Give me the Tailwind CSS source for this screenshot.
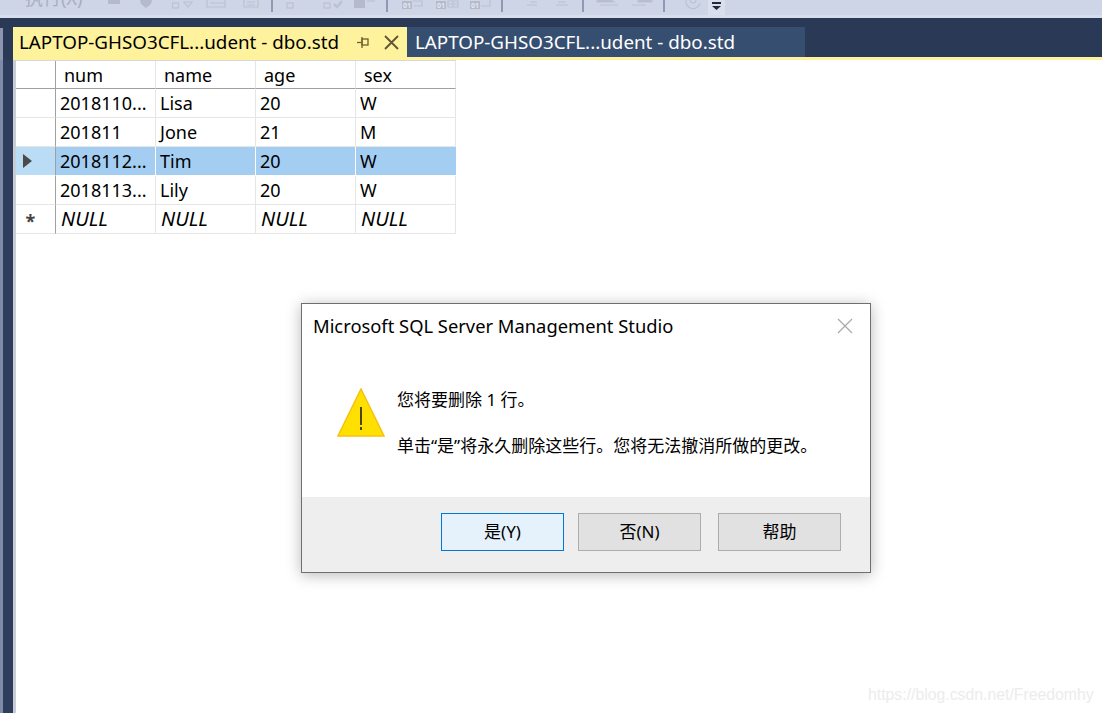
<!DOCTYPE html>
<html lang="zh-CN">
<head>
    <meta charset="UTF-8">
    <title>Microsoft SQL Server Management Studio</title>
    <script src="https://cdn.jsdelivr.net/npm/@tailwindcss/browser@4"></script>
</head>
<body class="bg-white overflow-hidden font-['Noto_Sans','Noto_Sans_CJK_SC',sans-serif] text-[18px] text-black">
    <div class="relative flex flex-col w-[1102px] h-[713px] overflow-hidden">

        <!-- Toolbar, cut off at the top of the shot -->
        <div class="relative h-[18px] shrink-0 bg-[#cdd5e6] overflow-hidden border-b-[3px] border-[#d7ddea]">
            <span class="block ml-[25px] -mt-[15px] leading-[26px] text-[#a9afbe]">执行(X)</span>
            <svg class="absolute left-0 top-0" width="1102" height="15" viewBox="0 0 1102 15" fill="none" stroke="#bcc2d1" stroke-width="1.200">
                <rect x="108" y="0" width="12" height="4" fill="#b5bbcb" stroke="none"/>
                <path d="M140 0h12l-1 4-5 4-5-4z" fill="#b5bbcb" stroke="none"/>
                <rect x="172.500" y="3" width="6" height="5"/>
                <path d="M184 2h8l-4 5z"/>
                <path d="M207 0v7h18v-7M210 3h15"/>
                <path d="M244 0v7h14v-7M247 2h8M247 5h8"/>
                <rect x="287" y="3" width="6" height="5"/>
                <rect x="324" y="3" width="6" height="5"/>
                <path d="M334 4l3 3 5-6" stroke-width="2.500"/>
                <rect x="354" y="0" width="11" height="8" fill="#b5bbcb" stroke="none"/>
                <path d="M367 1h8"/>
                <rect x="402" y="1" width="10" height="8" fill="#b5bbcb" stroke="none"/>
                <text x="403" y="8" font-size="7" font-weight="700" fill="#e4e8f1" stroke="none">01</text>
                <path d="M413 1h9v5h-8"/>
                <rect x="436" y="1" width="10" height="8" fill="#b5bbcb" stroke="none"/>
                <text x="437" y="8" font-size="7" font-weight="700" fill="#e4e8f1" stroke="none">01</text>
                <path d="M448 1h10v6h-10zM453 1v6M448 4h10"/>
                <rect x="470" y="1" width="10" height="8" fill="#b5bbcb" stroke="none"/>
                <text x="471" y="8" font-size="7" font-weight="700" fill="#e4e8f1" stroke="none">01</text>
                <path d="M490 0v6h-9"/>
                <path d="M530 2h7M527 5h10"/>
                <path d="M558 2h8M556 5h12"/>
                <path d="M597 0h14l3 2h-17zM600 5h18" fill="#b5bbcb"/>
                <path d="M638 0h14v2h-14zM632 5h14" fill="#b5bbcb"/>
                <path d="M686 0a7 7 0 0 0 14 3M690 0a3 3 0 0 0 6 0"/>
                <g fill="#8e9ab3" stroke="none">
                    <rect x="271" y="0" width="2" height="12"/>
                    <rect x="386" y="0" width="2" height="12"/>
                    <rect x="501" y="0" width="2" height="12"/>
                    <rect x="582" y="0" width="2" height="12"/>
                    <rect x="663" y="0" width="2" height="12"/>
                </g>
                <rect x="708" y="0" width="17" height="15" fill="#d9dfec" stroke="none"/>
                <rect x="712" y="2" width="9" height="2" fill="#1e2a3a" stroke="none"/>
                <path d="M712 6h9l-4.500 4z" fill="#1e2a3a" stroke="none"/>
            </svg>
        </div>

        <!-- Document tabs -->
        <div class="flex h-[42px] shrink-0 bg-[#2a3a56]">
            <div class="w-[3px] h-[32px] mt-[10px] bg-[#8c96b0]"></div>
            <div class="flex-1 flex flex-col justify-end ml-[10px]">
                <div class="flex h-[30px] text-[18.8px]">
                    <div class="flex items-center w-[394px] pl-[6px] pr-[8px] bg-[#fff29d]">
                        <span class="flex-1 whitespace-nowrap">LAPTOP-GHSO3CFL...udent - dbo.std</span>
                        <svg class="mr-[14px]" width="13" height="11" viewBox="0 0 13 11" fill="none" stroke="#6b5f2e" stroke-width="1.300">
                            <path d="M0 5.500h4"/>
                            <rect x="5" y="2" width="6" height="6"/>
                            <path d="M5 0v11"/>
                        </svg>
                        <svg width="15" height="15" viewBox="0 0 15 15" fill="none" stroke="#5e5434" stroke-width="1.800">
                            <path d="M1 1l13 13M14 1L1 14"/>
                        </svg>
                    </div>
                    <div class="flex items-center w-[398px] pl-[8px] bg-[#364f70] text-white whitespace-nowrap">LAPTOP-GHSO3CFL...udent - dbo.std</div>
                </div>
                <div class="h-[3px] bg-[#fff29d]"></div>
            </div>
        </div>

        <!-- Results grid -->
        <div class="flex-1 flex min-h-0">
            <div class="w-[3px] bg-[#7f89a8]"></div>
            <div class="w-[10px] bg-[#2e3d5c]"></div>
            <div class="w-[3px] bg-[#c9cdd8]"></div>
            <div class="self-start grid grid-cols-[40px_100px_100px_100px_100px] grid-rows-[28px_29px_29px_29px_29px_29px] w-[440px] border-t border-[#d8d8d8]">
                <div class="border-r border-b border-r-[#a0a0a0] border-b-[#a0a0a0]"></div>
                <div class="flex items-center pl-[8px] pt-[1px] border-r border-b border-r-[#e6e6e6] border-b-[#a0a0a0]">num</div>
                <div class="flex items-center pl-[8px] pt-[1px] border-r border-b border-r-[#e6e6e6] border-b-[#a0a0a0]">name</div>
                <div class="flex items-center pl-[8px] pt-[1px] border-r border-b border-r-[#e6e6e6] border-b-[#a0a0a0]">age</div>
                <div class="flex items-center pl-[8px] pt-[1px] border-r border-b border-r-[#e6e6e6] border-b-[#a0a0a0]">sex</div>

                <div class="border-r border-b border-r-[#a0a0a0] border-b-[#e6e6e6]"></div>
                <div class="flex items-center pl-[4px] border-r border-b border-[#e6e6e6]">2018110...</div>
                <div class="flex items-center pl-[4px] border-r border-b border-[#e6e6e6]">Lisa</div>
                <div class="flex items-center pl-[4px] border-r border-b border-[#e6e6e6]">20</div>
                <div class="flex items-center pl-[4px] border-r border-b border-[#e6e6e6]">W</div>

                <div class="border-r border-b border-r-[#a0a0a0] border-b-[#e6e6e6]"></div>
                <div class="flex items-center pl-[4px] border-r border-b border-[#e6e6e6]">201811</div>
                <div class="flex items-center pl-[4px] border-r border-b border-[#e6e6e6]">Jone</div>
                <div class="flex items-center pl-[4px] border-r border-b border-[#e6e6e6]">21</div>
                <div class="flex items-center pl-[4px] border-r border-b border-[#e6e6e6]">M</div>

                <div class="flex items-center pl-[7px] bg-[#bbdcf5] border-r border-b border-r-[#a0a0a0] border-b-white">
                    <svg width="9" height="14" viewBox="0 0 9 14"><path d="M0 0l9 7-9 7z" fill="#4a4a4a"/></svg>
                </div>
                <div class="flex items-center pl-[4px] bg-[#a3cdf1] border-r border-b border-white">2018112...</div>
                <div class="flex items-center pl-[4px] bg-[#a3cdf1] border-r border-b border-white">Tim</div>
                <div class="flex items-center pl-[4px] bg-[#a3cdf1] border-r border-b border-white">20</div>
                <div class="flex items-center pl-[4px] bg-[#a3cdf1] border-b border-b-white">W</div>

                <div class="border-r border-b border-r-[#a0a0a0] border-b-[#e6e6e6]"></div>
                <div class="flex items-center pl-[4px] border-r border-b border-[#e6e6e6]">2018113...</div>
                <div class="flex items-center pl-[4px] border-r border-b border-[#e6e6e6]">Lily</div>
                <div class="flex items-center pl-[4px] border-r border-b border-[#e6e6e6]">20</div>
                <div class="flex items-center pl-[4px] border-r border-b border-[#e6e6e6]">W</div>

                <div class="flex items-center justify-center pr-[10px] pt-[5px] border-r border-b border-r-[#a0a0a0] border-b-[#e6e6e6] text-[#444] font-bold">*</div>
                <div class="flex items-center pl-[5px] italic text-[20px] border-r border-b border-[#e6e6e6]">NULL</div>
                <div class="flex items-center pl-[5px] italic text-[20px] border-r border-b border-[#e6e6e6]">NULL</div>
                <div class="flex items-center pl-[5px] italic text-[20px] border-r border-b border-[#e6e6e6]">NULL</div>
                <div class="flex items-center pl-[5px] italic text-[20px] border-r border-b border-[#e6e6e6]">NULL</div>
            </div>
        </div>

        <!-- Confirm dialog -->
        <div class="absolute left-[301px] top-[303px] flex flex-col w-[570px] h-[270px] bg-white border border-[#6f6f6f] shadow-[0_2px_14px_rgba(0,0,0,0.28)]">
            <div class="flex items-center justify-between pl-[11px] pr-[17px] h-[43px] text-[18.35px]">
                <span class="whitespace-nowrap">Microsoft SQL Server Management Studio</span>
                <svg width="16" height="16" viewBox="0 0 16 16" fill="none" stroke="#a8a8a8" stroke-width="1.200">
                    <path d="M1 1l14 14M15 1L1 15"/>
                </svg>
            </div>
            <div class="flex-1 flex pl-[35px] pt-[41px]">
                <svg class="shrink-0" width="48" height="50" viewBox="0 0 48 50">
                    <path d="M24 1L47 48H1z" fill="#ffe000" stroke="#f5c211" stroke-width="1.500"/>
                    <path d="M24 19v23" stroke="#111" stroke-width="1.500" stroke-dasharray="18 2 3"/>
                </svg>
                <div class="flex flex-col gap-[22px] ml-[12px] text-[17px] leading-[24px]">
                    <p>您将要删除 1 行。</p>
                    <p class="whitespace-nowrap">单击“是”将永久删除这些行。您将无法撤消所做的更改。</p>
                </div>
            </div>
            <div class="flex items-start gap-[14px] h-[75px] pl-[139px] pt-[16px] bg-[#eeeeee] text-[17px]">
                <button class="w-[123px] h-[38px] bg-[#e5f1fb] border border-[#0078d7]">是(Y)</button>
                <button class="w-[123px] h-[38px] bg-[#e1e1e1] border border-[#adadad]">否(N)</button>
                <button class="ml-[3px] w-[123px] h-[38px] bg-[#e1e1e1] border border-[#adadad]">帮助</button>
            </div>
        </div>

        <!-- Watermark -->
        <span class="absolute left-[868px] top-[683px] font-['Liberation_Sans',sans-serif] text-[15.8px] text-[#ececec]">https://blog.csdn.net/Freedomhy</span>
    </div>
</body>
</html>
